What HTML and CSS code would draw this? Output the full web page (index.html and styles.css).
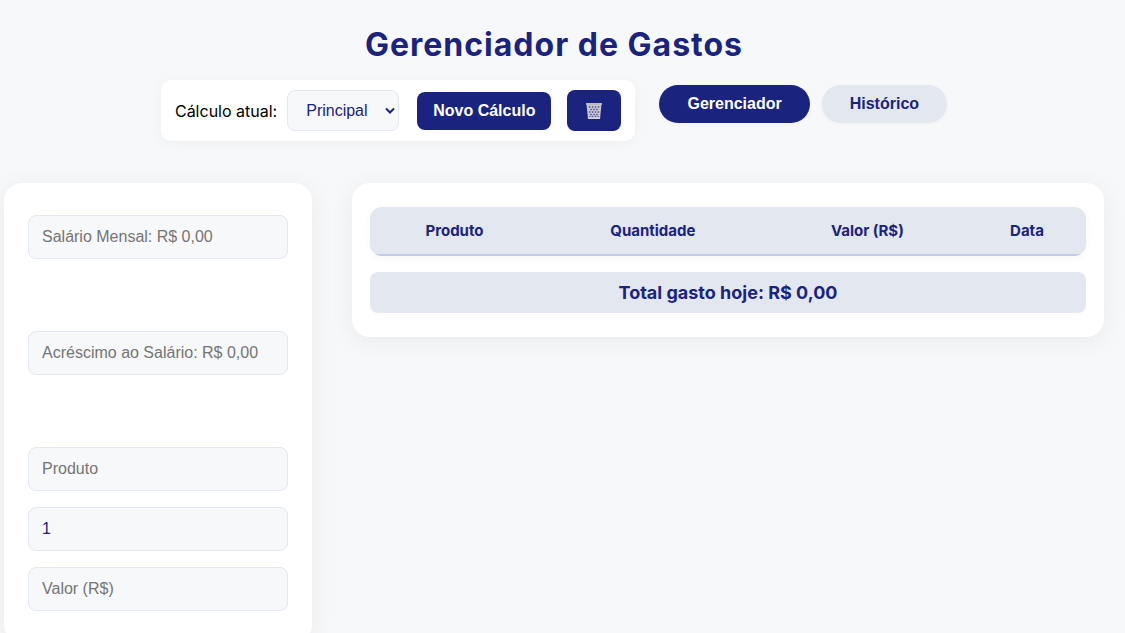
FILE: index.html
```html
<!DOCTYPE html>
<html lang="pt-BR">
<head>
<meta charset="utf-8">
<meta name="viewport" content="width=device-width, initial-scale=1">
<title>Gerenciador de Gastos</title>
<link rel="stylesheet" href="styles.css">
</head>
<body>
<header class="header">
  <h1 class="title">Gerenciador de Gastos</h1>
  <div class="toolbar">
    <div class="calc-bar">
      <div class="calc-select">
        <label for="calculo">Cálculo atual:</label>
        <div class="select-wrap">
          <select id="calculo" class="select">
            <option>Principal</option>
          </select>
          <svg class="chevron" width="10" height="8" viewBox="0 0 10 8" aria-hidden="true"><path d="M1 1.5 5 5.5 9 1.5" fill="none" stroke="currentColor" stroke-width="2"/></svg>
        </div>
      </div>
      <div class="calc-actions">
        <button type="button" class="btn">Novo Cálculo</button>
        <button type="button" class="btn btn-trash" aria-label="Excluir cálculo">
          <svg width="18" height="18" viewBox="0 0 18 18" aria-hidden="true">
            <path d="M1.500 2H16.500L15 17H3Z" fill="#c9c5d0"/>
            <path d="M1 1H17V3H1Z" fill="#bdb8c2"/>
            <g fill="#4a4c96">
              <path d="M4.500 4l1 1-1 1-1-1zM7.500 4l1 1-1 1-1-1zM10.500 4l1 1-1 1-1-1zM13.500 4l1 1-1 1-1-1z"/>
              <path d="M6 6.500l1 1-1 1-1-1zM9 6.500l1 1-1 1-1-1zM12 6.500l1 1-1 1-1-1z"/>
              <path d="M4.700 9l1 1-1 1-1-1zM7.500 9l1 1-1 1-1-1zM10.500 9l1 1-1 1-1-1zM13.300 9l1 1-1 1-1-1z"/>
              <path d="M6 11.500l1 1-1 1-1-1zM9 11.500l1 1-1 1-1-1zM12 11.500l1 1-1 1-1-1z"/>
              <path d="M4.900 13.500l.8.9-.8.9-.8-.9zM7.500 13.500l1 .9-1 .9-1-.9zM10.500 13.500l1 .9-1 .9-1-.9zM13.100 13.500l.8.9-.8.9-.8-.9z"/>
            </g>
            <path d="M2.900 15.500H15.100L15 17H3Z" fill="#d5d2dc"/>
          </svg>
        </button>
      </div>
    </div>
    <nav class="tabs">
      <button type="button" class="tab tab-active">Gerenciador</button>
      <button type="button" class="tab">Histórico</button>
    </nav>
  </div>
</header>
<main class="layout">
  <form class="panel form">
    <div class="field-group">
      <input class="field" type="text" placeholder="Salário Mensal: R$ 0,00" aria-label="Salário Mensal">
    </div>
    <div class="field-group">
      <input class="field" type="text" placeholder="Acréscimo ao Salário: R$ 0,00" aria-label="Acréscimo ao Salário">
    </div>
    <div class="field-group">
      <input class="field" type="text" placeholder="Produto" aria-label="Produto">
      <input class="field" type="number" value="1" min="1" aria-label="Quantidade">
      <input class="field" type="text" placeholder="Valor (R$)" aria-label="Valor (R$)">
    </div>
  </form>
  <section class="panel results">
    <table class="table">
      <thead>
        <tr><th>Produto</th><th>Quantidade</th><th>Valor (R$)</th><th>Data</th></tr>
      </thead>
      <tbody></tbody>
    </table>
    <div class="total">Total gasto hoje: R$ 0,00</div>
  </section>
</main>
</body>
</html>
```

FILE: styles.css
```css
* {
  box-sizing: border-box;
}

body {
  margin: 0;
  padding: 24px 17px 24px 0;
  background: #f7f8fa;
  color: #000;
  font: 16px/20px Inter, "Liberation Sans", sans-serif;
}

button,
input,
select {
  font-family: "Liberation Sans", Arial, sans-serif;
  font-size: 16px;
}

.header {
  text-align: center;
}

.title {
  margin: 0 0 14px;
  color: #1a237e;
  font-size: 32px;
  line-height: 42px;
  font-weight: 700;
  letter-spacing: 1px;
}

.toolbar {
  display: flex;
  justify-content: center;
  align-items: center;
  gap: 24px;
}

.calc-bar {
  display: flex;
  align-items: center;
  gap: 18px;
  padding: 10px 14px;
  background: #fff;
  border-radius: 10px;
  box-shadow: 0 2px 12px rgba(0, 0, 0, 0.04);
}

.calc-select {
  display: flex;
  align-items: center;
  gap: 10px;
}

.calc-actions {
  display: flex;
  align-items: center;
  gap: 16px;
}

.select-wrap {
  display: grid;
  align-items: center;
}

.select {
  grid-area: 1 / 1;
  appearance: none;
  width: 112px;
  height: 41px;
  padding: 0 18px;
  border: 1px solid #e3e7ef;
  border-radius: 8px;
  background: #f7f8fa;
  color: #1a237e;
}

.chevron {
  grid-area: 1 / 1;
  justify-self: end;
  margin-right: 4px;
  color: #1a237e;
  pointer-events: none;
}

.btn {
  height: 38px;
  padding: 0 16px;
  border: 0;
  border-radius: 8px;
  background: #1a237e;
  color: #fff;
  font-weight: 700;
}

.btn-trash {
  display: flex;
  align-items: center;
  height: 41px;
  padding: 0 18px;
}

.tabs {
  display: flex;
  gap: 12px;
  margin-bottom: 13px;
}

.tab {
  height: 38px;
  padding: 0 28px;
  border: 0;
  border-radius: 20px;
  background: #e3e7ef;
  color: #1a237e;
  font-weight: 700;
  box-shadow: 0 1px 4px rgba(0, 0, 0, 0.04);
}

.tab-active {
  background: #1a237e;
  color: #fff;
}

.layout {
  display: grid;
  grid-template-columns: 308px 1fr;
  align-items: start;
  gap: 40px;
  max-width: 1100px;
  margin: 42px auto 0;
}

.panel {
  background: #fff;
  border-radius: 18px;
  box-shadow: 0 4px 24px rgba(0, 0, 0, 0.06);
}

.form {
  display: flex;
  flex-direction: column;
  gap: 72px;
  padding: 32px 24px;
}

.field-group {
  display: flex;
  flex-direction: column;
  gap: 16px;
}

.field {
  width: 100%;
  height: 44px;
  padding: 0 13px;
  border: 1px solid #e3e7ef;
  border-radius: 8px;
  background: #f7f8fa;
  color: #1a237e;
}

.field::placeholder {
  color: #757575;
}

.results {
  padding: 24px 18px;
}

.table {
  width: 100%;
  margin-bottom: 16px;
  border-collapse: separate;
  border-spacing: 0;
  border-radius: 12px;
  overflow: hidden;
  box-shadow: 0 2px 8px rgba(0, 0, 0, 0.04);
}

.table th {
  height: 49px;
  padding: 0 10px;
  border-bottom: 2px solid #c5cae9;
  background: #e3e7ef;
  color: #1a237e;
  font-size: 15px;
  font-weight: 700;
}

.table th:last-child {
  width: 118px;
}

.total {
  padding: 10px;
  border-radius: 8px;
  background: #e3e7ef;
  color: #1a237e;
  font-size: 18px;
  line-height: 21px;
  font-weight: 700;
  text-align: center;
}
```
